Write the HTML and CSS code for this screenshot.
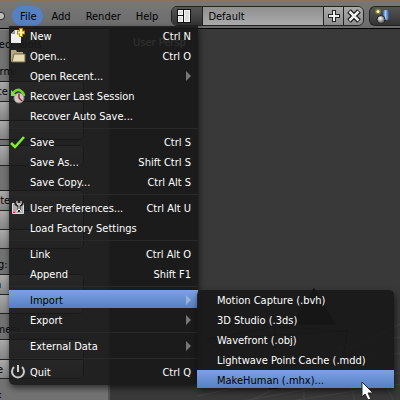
FILE: index.html
```
<!DOCTYPE html>
<html lang="en">
<head>
<meta charset="utf-8">
<title>Blender</title>
<link rel="stylesheet" href="styles.css">
</head>
<body>
<header class="topbar">
  <button class="collapse" aria-label="Collapse menus"></button>
  <nav class="menubar">
    <button class="tab active">File</button>
    <button class="tab">Add</button>
    <button class="tab">Render</button>
    <button class="tab">Help</button>
  </nav>
  <div class="screen-picker">
    <button class="dark" aria-label="Browse screens">
      <svg width="14" height="14" viewBox="0 0 14 14"><path d="M0 0h14v14H0z" fill="#111"/><path d="M1 1h5v5H1zM1 7h5v6H1zM7 1h6v12H7z" fill="#f4f4f4"/><path d="M2 2h3v3H2zM2 8h3v4H2zM8 2h4v10H8z" fill="#ddd"/></svg>
    </button>
    <input type="text" value="Default" aria-label="Screen name">
    <button class="light" aria-label="Add screen">
      <svg width="14" height="14" viewBox="0 0 14 14"><path d="M7 1v12M1 7h12" stroke="#222" stroke-width="4"/><path d="M7 2v10M2 7h10" stroke="#eee" stroke-width="2"/></svg>
    </button>
    <button class="light" aria-label="Delete screen">
      <svg width="14" height="14" viewBox="0 0 14 14"><path d="M2 2l10 10M12 2L2 12" stroke="#111" stroke-width="5"/><path d="M2.500 2.500l9 9M11.500 2.500l-9 9" stroke="#eee" stroke-width="2.500"/></svg>
    </button>
  </div>
  <button class="dark scene" aria-label="Browse scenes">
    <svg width="16" height="16" viewBox="0 0 16 16"><defs><linearGradient id="cyl"><stop stop-color="#3564aa"/><stop offset=".4" stop-color="#a8ccff"/><stop offset="1" stop-color="#234a8c"/></linearGradient><radialGradient id="ball" cx=".4" cy=".35"><stop stop-color="#fff"/><stop offset="1" stop-color="#777"/></radialGradient></defs><path d="M9 3q3-2 6 0v8q-3 2-6 0z" fill="url(#cyl)"/><circle cx="4" cy="3.500" r="3" fill="#a5a030" opacity=".5"/><circle cx="4" cy="3.500" r="1.500" fill="#ffffb0"/><circle cx="7" cy="11.500" r="4" fill="url(#ball)" stroke="#222"/></svg>
  </button>
</header>
<main class="workspace">
  <aside class="tools">
    <h2>Object Tools</h2>
    <h3>Transform:</h3>
    <div class="group"><button>Translate</button><button>Rotate</button><button>Scale</button></div>
    <div class="group"><button>Origin</button></div>
    <h3 class="tight">Object:</h3>
    <div class="group"><button>Duplicate</button><button>Delete</button><button>Join</button></div>
    <h3>Shading:</h3>
    <div class="group"><button>Smooth</button><button>Flat</button></div>
    <h3>Keyframes:</h3>
    <div class="group"><button>Insert</button><button>Remove</button></div>
    <h3>Repeat:</h3>
  </aside>
  <section class="viewport">
    <span class="view-name">User Persp</span>
    <svg class="scene-view" width="290" height="372" viewBox="110 28 290 372"><g fill="none" stroke="#464646"><path d="M197 395l203-43M197 408l203-36M330 348l70-12M290 400l110-17M304 384v16M340 345l15 55M250 400l150-77M362 338l32 62"/></g><path d="M314 287l23 37h-47z" fill="#080808"/><path d="M207 338l68-12 73 4-10 50-68 8zM207 338l141-8M275 326l-5 62" fill="none" stroke="#111"/></svg>
  </section>
</main>

<div class="menu" role="menu">
  <button class="item"><svg width="16" height="16" viewBox="0 0 16 16"><path d="M1 6l4-4h6v13H1z" fill="#eee"/><path d="M1 6h4V2z" fill="#999"/><path d="M11 0v9M7 4.500h8" stroke="#ad8500" stroke-width="4"/><path d="M11 1v7M8 4.500h6" stroke="#fff5a0" stroke-width="2"/></svg><span>New</span><kbd>Ctrl N</kbd></button>
  <button class="item"><svg width="16" height="16" viewBox="0 0 16 16"><path d="M1 2h5l1 2h6v3H4v7H1z" fill="#b5a780"/><path d="M4 6h11v8H2z" fill="#e6dbb2" stroke="#70664a"/></svg><span>Open...</span><kbd>Ctrl O</kbd></button>
  <button class="item"><i></i><span>Open Recent...</span><b class="arrow"></b></button>
  <button class="item"><svg width="16" height="16" viewBox="0 0 16 16"><circle cx="9" cy="10" r="5" fill="#ccc" stroke="#888"/><path d="M9 6v4l3 3" fill="none" stroke="#b02020" stroke-width="1.500"/><path d="M3 5Q7 0 11 3q3 2 3 5" fill="none" stroke="#72d52b" stroke-width="2.500"/><path d="M1 2v6h6z" fill="#82e43a"/></svg><span>Recover Last Session</span></button>
  <button class="item"><i></i><span>Recover Auto Save...</span></button>
  <hr>
  <button class="item"><svg width="16" height="16" viewBox="0 0 16 16"><path d="M1 9l4 4L14 3" fill="none" stroke="#7ff02c" stroke-width="2.500"/></svg><span>Save</span><kbd>Ctrl S</kbd></button>
  <button class="item"><i></i><span>Save As...</span><kbd>Shift Ctrl S</kbd></button>
  <button class="item"><i></i><span>Save Copy...</span><kbd>Ctrl Alt S</kbd></button>
  <hr>
  <button class="item"><svg width="16" height="16" viewBox="0 0 16 16"><path d="M2.500 3.500h11v10h-11z" fill="#aaa" stroke="#ddd"/><path d="M6 1v3l3 2 3-2V1M9 5v7" fill="none" stroke="#222" stroke-width="3"/><path d="M7 1v3l2 1 2-1V1M9 5v5M7 12v-1l2-2 2 2v1" fill="none" stroke="#fff"/><path d="M3 12h2v1H3z" fill="#d22"/></svg><span>User Preferences...</span><kbd>Ctrl Alt U</kbd></button>
  <button class="item"><i></i><span>Load Factory Settings</span></button>
  <hr>
  <button class="item"><i></i><span>Link</span><kbd>Ctrl Alt O</kbd></button>
  <button class="item"><i></i><span>Append</span><kbd>Shift F1</kbd></button>
  <hr>
  <button class="item selected"><i></i><span>Import</span><b class="arrow"></b></button>
  <button class="item"><i></i><span>Export</span><b class="arrow"></b></button>
  <hr>
  <button class="item"><i></i><span>External Data</span><b class="arrow"></b></button>
  <hr>
  <button class="item"><svg width="16" height="16" viewBox="0 0 16 16"><path d="M4 3a6 6 0 1 0 8 0M8 1v7" fill="none" stroke="#ccc" stroke-width="2"/></svg><span>Quit</span><kbd>Ctrl Q</kbd></button>
</div>
<div class="menu submenu" role="menu">
  <button class="item"><span>Motion Capture (.bvh)</span></button>
  <button class="item"><span>3D Studio (.3ds)</span></button>
  <button class="item"><span>Wavefront (.obj)</span></button>
  <button class="item"><span>Lightwave Point Cache (.mdd)</span></button>
  <button class="item selected"><span>MakeHuman (.mhx)...</span></button>
</div>
<svg class="cursor" width="14" height="20" viewBox="0 0 14 20"><path d="M1 1v15l3-3 3 6 3-1-3-6h5z" fill="#fff" stroke="#222"/></svg>
</body>
</html>
```
FILE: styles.css
```
* { box-sizing: border-box; }
body {
  margin: 0;
  height: 100vh;
  overflow: hidden;
  display: flex;
  flex-direction: column;
  background: #393939;
  font: 11px/20px "DejaVu Sans Condensed", "DejaVu Sans", sans-serif;
  color: #000;
}
button, input { font: inherit; color: inherit; border: 0; margin: 0; padding: 0; background: none; }
svg { display: block; flex: none; }

.topbar {
  display: flex;
  align-items: center;
  height: 29px;
  flex: none;
  padding-top: 1px;
  border-top: 2px solid #867657;
  border-bottom: 1px solid #000;
  background: linear-gradient(#777, #6c6c6c);
}
.collapse { width: 5px; height: 8px; border: 1px solid #333; border-left: 0; border-radius: 0 4px 4px 0; background: #bbb; }
.menubar { display: flex; margin-left: 7px; flex: none; }
.tab { height: 20px; padding: 1px 7px 0 8px; }
.tab.active { background: #5680c2; border-radius: 10px; }
.screen-picker { display: flex; height: 20px; margin-left: 6px; border: 1px solid #222; border-radius: 6px; overflow: hidden; flex: 1; }
.screen-picker input { flex: 1; min-width: 0; padding: 2px 5px 0; background: linear-gradient(#8f8f8f, #aaa); }
.dark, .light { display: flex; align-items: center; justify-content: center; }
.dark { width: 31px; background: linear-gradient(#555, #333); border-right: 1px solid #222; }
.screen-picker .dark { padding-right: 6px; }
.light { width: 20px; background: linear-gradient(#aaa, #8c8c8c); border-left: 1px solid #222; }
.scene { height: 20px; margin-left: 5px; padding-right: 6px; border: 1px solid #222; border-right: 0; border-radius: 6px 0 0 6px; }

.workspace { display: flex; flex: 1; min-height: 0; }
.tools { width: 160px; margin-left: -50px; padding: 5px 24px 0 12px; flex: none; background: #727272; border-top: 1px solid #888; border-right: 2px solid #555; }
.tools h2, .tools h3 { margin: 0; font-size: 11px; font-weight: 400; line-height: 20px; }
.tools h2 { padding-left: 20px; margin-bottom: 7px; }
.tools h3 { height: 19px; margin: 6px 0 0; padding-left: 2px; }
.tools h3.tight { margin-top: 3px; }
.group { display: flex; flex-direction: column; border: 1px solid #222; border-radius: 5px; overflow: hidden; margin-bottom: 5px; }
.group button { height: 19px; text-align: left; background: linear-gradient(#aaa, #858585); }
.group button + button { border-top: 1px solid #222; }
.viewport { position: relative; flex: 1; overflow: hidden; }
.view-name { position: absolute; left: 23px; top: 4px; color: #fff; }
.scene-view { position: absolute; left: 0; top: 0; }

.menu {
  position: absolute;
  left: 9px;
  top: 26px;
  width: 189px;
  padding-bottom: 3px;
  background: rgba(24, 24, 24, .9);
  border-radius: 0 0 5px 5px;
  box-shadow: 1px 3px 6px rgba(0, 0, 0, .6);
  color: #fff;
}
.item { display: flex; align-items: center; width: 100%; height: 20px; padding: 0 7px 0 1px; text-align: left; }
.item i { width: 16px; flex: none; }
.item span { margin-left: 4px; flex: 1; white-space: nowrap; }
.item kbd { font: inherit; white-space: nowrap; }
.item span, .item kbd { line-height: 18px; padding-top: 2px; }
.item.selected { color: #000; background: linear-gradient(#7ba2e4, #5680c2) 0 0 / 100% 18px no-repeat; }
.arrow { border: 5px solid transparent; border-left-color: #777; border-right: 0; }
.selected .arrow { border-left-color: #9ab0d5; }
.menu hr { height: 6px; margin: 0; border: 0; background: linear-gradient(transparent 2px, #292929 2px, #292929 3px, transparent 3px); }
.submenu { left: 197px; top: 290px; width: 197px; height: 98px; padding-bottom: 0; border-radius: 5px 5px 0 0; }
.submenu .item { padding-left: 16px; }
.cursor { position: absolute; left: 361px; top: 381px; }
```
